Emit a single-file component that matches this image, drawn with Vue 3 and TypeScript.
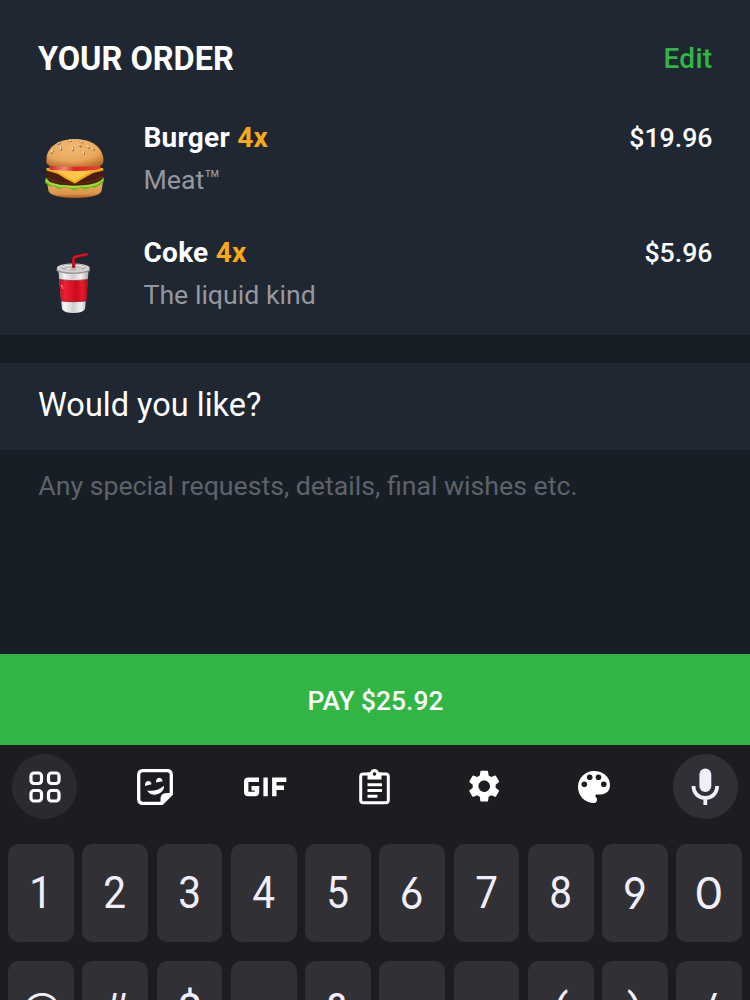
<script setup lang="ts">
interface OrderItem {
  id: 'burger' | 'coke'
  name: string
  count: number
  note: string
  price: string
}

const items: OrderItem[] = [
  { id: 'burger', name: 'Burger', count: 4, note: 'Meat™', price: '$19.96' },
  { id: 'coke', name: 'Coke', count: 4, note: 'The liquid kind', price: '$5.96' },
]

const rows: string[][] = [
  ['1', '2', '3', '4', '5', '6', '7', '8', '9', '0'],
  ['@', '#', '$', '_', '&', '-', '+', '(', ')', '/'],
]
</script>

<template>
  <main class="screen">
    <section class="order">
      <header class="order-head">
        <h1>YOUR ORDER</h1>
        <a class="edit">Edit</a>
      </header>
      <article v-for="item in items" :key="item.id" class="item">
        <svg v-if="item.id === 'burger'" class="thumb" viewBox="0 0 90 90">
          <defs>
            <radialGradient id="bun" cx="0.45" cy="0.3" r="0.75">
              <stop offset="0" stop-color="#f3b870" />
              <stop offset="0.65" stop-color="#e8a85e" />
              <stop offset="1" stop-color="#bd702b" />
            </radialGradient>
            <linearGradient id="base" x1="0" y1="0" x2="0" y2="1">
              <stop offset="0.3" stop-color="#e7a55c" />
              <stop offset="0.75" stop-color="#dc9247" />
              <stop offset="1" stop-color="#a9581c" />
            </linearGradient>
            <linearGradient id="tomato" x1="0" y1="0" x2="1" y2="0">
              <stop offset="0" stop-color="#c91f20" />
              <stop offset="0.3" stop-color="#f3847a" />
              <stop offset="0.5" stop-color="#df2525" />
              <stop offset="1" stop-color="#e04434" />
            </linearGradient>
          </defs>
          <path d="M17 57 Q45 62 73 57 L71.500 66 Q69 72.500 45 73 Q21 72.500 18.500 66 Z" fill="url(#base)" />
          <path d="M16 53 Q14 56 15.500 58.500 Q18 58.500 19 62 Q23 60.500 26 62.500 Q29 65.500 33 63 Q37 61.500 40 63.500 Q44 66.500 48 63.500 Q52 62 54 64.500 Q58 64.500 61 62 Q65 64.500 68 60.500 Q70 61.500 72 58 Q75 57 73.500 52 Z" fill="#6db51c" />
          <path d="M16.500 54.500 Q18 58 22 59 Q27 60 31 61.500 Q36 60 41 62 Q47 62.500 52 60.800 Q57 62 62 60 Q68 60 72.500 54" fill="none" stroke="#a0dc3c" stroke-width="2" />
          <path d="M17 46 Q45 48 73 46 Q75.500 52 70 56 Q61 60.500 45 60.500 Q29 60.500 20 57 Q14.500 53 17 46Z" fill="#4a1d12" />
          <path d="M18 53 Q28 58.500 44 58.300 Q62 58.500 72 51.500" fill="none" stroke="#692a18" stroke-width="1.200" />
          <path d="M16.500 43 L73 43 L73.500 45.500 L63 48 Q54 53 45 58.500 Q35 54 28 49 L16.500 45.500 Z" fill="#f6a51b" />
          <path d="M17.500 43.200 H72 L61 46.500 Q52 52 44.500 56.500 Q36 52 29 47.500Z" fill="#ffc747" />
          <path d="M19 41 Q18 45.500 24 45 Q45 47 65 45 Q72 44.500 70.500 41 Z" fill="url(#tomato)" />
          <path d="M16.500 34 C17 23 27 14 45 14 S72.500 23 73.500 34 Q74 40 69 41 Q45 42.500 21 41 Q15.500 40 16.500 34Z" fill="url(#bun)" />
          <g stroke="#8e6032" stroke-width="1.700" stroke-linecap="round">
            <path d="M23 26 L21.500 28 M31 22.500 V25 M43 22.500 V25.500 M54 27 V29 M58 21 L59 23 M30 18 L28.500 19 M39 16 H41 M50 16.500 L52 17.500 M49 20 L51 21.500 M62 23 L64 25" />
          </g>
          <g stroke="#f3dfb5" stroke-width="1.400" stroke-linecap="round">
            <path d="M22.500 25.500 L21.500 27 M30.500 22 V24 M42.500 22.500 V24.500 M53.500 26.500 V28.500 M57.500 20.500 L58.500 22 M29.500 17.500 L28.500 18.300 M39 15.500 H40.500 M50 16 L51.500 17 M48.500 19.500 L50 20.500 M61.500 22.500 L63 24" />
          </g>
        </svg>
        <svg v-else class="thumb" viewBox="0 0 90 90">
          <defs>
            <linearGradient id="cup" x1="0" y1="0" x2="1" y2="0">
              <stop offset="0" stop-color="#bdbdbf" />
              <stop offset="0.2" stop-color="#f5f5f5" />
              <stop offset="0.5" stop-color="#cfcfcf" />
              <stop offset="0.75" stop-color="#f2f2f2" />
              <stop offset="1" stop-color="#a8a6a8" />
            </linearGradient>
            <linearGradient id="sleeve" x1="0" y1="0" x2="1" y2="0">
              <stop offset="0" stop-color="#b80f20" />
              <stop offset="0.2" stop-color="#ed2035" />
              <stop offset="0.6" stop-color="#cc0a1e" />
              <stop offset="0.8" stop-color="#e91a30" />
              <stop offset="1" stop-color="#a80c1a" />
            </linearGradient>
          </defs>
          <path d="M28.500 32 H58.500 L55 69 Q53 73 43.500 73 Q34 73 32 69 Z" fill="url(#cup)" />
          <path d="M29 39.500 Q43 42 58.200 39.500 L56.500 61 Q43 62.500 31 61Z" fill="url(#sleeve)" />
          <path d="M29 39.500 Q43 42 58.200 39.500 M31 61 Q43 62.500 56.500 61" fill="none" stroke="#79121d" stroke-width="0.700" />
          <ellipse cx="43.200" cy="30" rx="16.800" ry="4" fill="#aaa5a5" />
          <ellipse cx="43.200" cy="28" rx="16.400" ry="4.600" fill="#d8d3d2" />
          <ellipse cx="43.200" cy="27.200" rx="12.500" ry="2.800" fill="#c3bcbb" stroke="#9b9494" stroke-width="0.700" />
          <path d="M31 27 Q43 23 55 27 M36 29 H41 M46 29 H51" stroke="#eee" stroke-width="1" fill="none" />
          <path d="M27 30.700 Q43 36 59.500 30.700" stroke="#817c7c" stroke-width="1" stroke-dasharray="1.200 1.200" fill="none" />
          <path d="M43.700 26.500 V19 Q43.700 17.200 46 16.700 L56.500 14.500" stroke="#a70b19" stroke-width="3.300" fill="none" stroke-linecap="round" />
          <path d="M43.300 25 V19 Q43.300 17 46 16.400 L56.500 14.200" stroke="#dc1a2c" stroke-width="1.500" fill="none" stroke-linecap="round" />
          <path d="M31 46 h1.500 M32 48 h1.200 M31.300 44.800 v0.800" stroke="#ffc6c6" stroke-width="1" />
        </svg>
        <div class="details">
          <h2>{{ item.name }} <span class="count">{{ item.count }}x</span></h2>
          <p>{{ item.note }}</p>
        </div>
        <span class="price">{{ item.price }}</span>
      </article>
    </section>

    <section class="suggest"><span>Would you like?</span></section>
    <section class="comment"><span>Any special requests, details, final wishes etc.</span></section>
    <button class="pay"><span>PAY $25.92</span></button>

    <section class="keyboard">
      <nav class="tools">
        <span class="tool round menu">
          <svg width="32" height="32" viewBox="0 0 32 32" fill="none" stroke="#fff" stroke-width="3.200">
            <rect x="2" y="2" width="10.500" height="10.500" rx="3" />
            <rect x="19.500" y="2" width="10.500" height="10.500" rx="3" />
            <rect x="2" y="19.500" width="10.500" height="10.500" rx="3" />
            <rect x="19.500" y="19.500" width="10.500" height="10.500" rx="3" />
          </svg>
        </span>
        <span class="tool">
          <svg width="36" height="36" viewBox="0 0 36 36">
            <path d="M6 1.700 H30 Q34.300 1.700 34.300 6 V25 L25 34.300 H6 Q1.700 34.300 1.700 30 V6 Q1.700 1.700 6 1.700Z" fill="none" stroke="#fff" stroke-width="3.300" />
            <path d="M23.500 35 V30 Q23.500 24 29.500 24 H35Z" fill="#fff" />
            <path d="M10 21.500 C17 22.500 23 20.500 27 16.700 C27.500 22 22 25.700 17.500 25.700 Q12.500 25.700 10 21.500Z" fill="#fff" />
            <path d="M8 17 Q7.700 12.500 11 12 Q14 12 14.500 15.300Z M19 13.500 Q19 9 22 8.700 Q25.200 9 25.700 12.300Z" fill="#fff" />
          </svg>
        </span>
        <span class="tool">
          <svg width="44" height="20" viewBox="0 0 44 20" fill="none" stroke="#fff" stroke-width="4.400">
            <path d="M16 2.700 H5.200 Q3.200 2.700 3.200 4.700 V15 Q3.200 17 5.200 17 H12 Q14 17 14 15 V11.300 H8.500" />
            <path d="M22.600 0.500 V19.200 M31.300 19.200 V2.700 H43.300 M31.300 10.800 H41" />
          </svg>
        </span>
        <span class="tool">
          <svg width="31" height="36" viewBox="0 0 31 36">
            <rect x="1.700" y="5" width="27.600" height="28.800" rx="2.600" fill="none" stroke="#fff" stroke-width="3" />
            <path d="M8.500 3.500 H11.200 Q12 0 15.500 0 T19.800 3.500 H22.500 V10.500 H8.500Z" fill="#fff" />
            <circle cx="15.500" cy="5" r="1.800" fill="#1d1c20" />
            <path d="M8.500 15.700 H23 M8.500 21.500 H23 M8.500 27.300 H18.500" stroke="#fff" stroke-width="3" />
          </svg>
        </span>
        <span class="tool nudge">
          <svg width="38.400" height="38.400" viewBox="0 0 24 24" fill="#fff">
            <path d="M19.140 12.940c.04-.3.06-.61.06-.94s-.02-.64-.07-.94l2.030-1.580a.49.49 0 0 0 .12-.61l-1.920-3.320a.488.488 0 0 0-.59-.22l-2.390.96a7 7 0 0 0-1.620-.94l-.36-2.540a.484.484 0 0 0-.48-.41h-3.840c-.24 0-.43.170-.47.410l-.36 2.540c-.59.240-1.130.570-1.620.940l-2.390-.96a.49.49 0 0 0-.59.220L2.740 8.870c-.12.210-.08.470.12.610l2.030 1.580c-.05.300-.09.630-.09.940s.02.640.07.940l-2.030 1.580a.49.49 0 0 0-.12.610l1.920 3.320c.12.220.37.290.59.220l2.390-.96c.5.380 1.030.7 1.620.94l.36 2.540c.05.240.24.410.48.410h3.840c.24 0 .44-.17.470-.41l.36-2.540c.59-.24 1.130-.56 1.620-.94l2.390.96c.22.080.47 0 .59-.22l1.920-3.320a.49.49 0 0 0-.12-.61zM12 15.600A3.610 3.610 0 0 1 8.400 12c0-1.980 1.620-3.600 3.600-3.600s3.600 1.620 3.600 3.600-1.620 3.600-3.600 3.600z" />
          </svg>
        </span>
        <span class="tool nudge">
          <svg width="32" height="32" viewBox="0 0 32 32">
            <path d="M16 0 C25 0 32 5.800 32 14 C32 20 28 23.500 22.500 23.500 H19 Q16.500 24 17.700 26 Q20 28 18.500 30.500 Q18 32 16 32 C7 32 0 25 0 16 S7 0 16 0Z" fill="#fff" />
            <g fill="#1d1c20"><circle cx="6.300" cy="13.300" r="2.800" /><circle cx="11.700" cy="6.300" r="2.800" /><circle cx="20.500" cy="6.300" r="2.800" /><circle cx="25.800" cy="13.300" r="2.800" /></g>
          </svg>
        </span>
        <span class="tool round mic">
          <svg width="28" height="38" viewBox="0 0 28 38">
            <rect x="8.400" y="0.500" width="11.900" height="23.500" rx="5.900" fill="#f0eefa" />
            <path d="M2.500 18 C2.500 34 26.100 34 26.100 18 M14.300 29.500 V37" fill="none" stroke="#f0eefa" stroke-width="3.800" />
          </svg>
        </span>
      </nav>
      <div v-for="(row, i) in rows" :key="i" class="row">
        <button v-for="key in row" :key="key" class="key">
          <span :class="{ digit: i === 0, open: key === '6' || key === '9', zero: key === '0', plus: key === '+' }">{{ key }}</span>
        </button>
      </div>
    </section>
  </main>
</template>

<style>
body {
  margin: 0;
  background: #1d1c20;
}
</style>

<style scoped>
.screen {
  width: 750px;
  height: 1000px;
  overflow: hidden;
  display: flex;
  flex-direction: column;
  background: #171e26;
  color: #fff;
  font-family: Roboto, 'Liberation Sans', sans-serif;
  font-size: 26.700px;
}
h1, h2, p {
  margin: 0;
}
button {
  border: 0;
  padding: 0;
  font: inherit;
  color: inherit;
}
.order {
  box-sizing: border-box;
  flex: none;
  height: 335px;
  padding: 38px 37.500px 0 38px;
  background: #1e2732;
}
.order-head {
  display: flex;
  justify-content: space-between;
  height: 72px;
  line-height: 40px;
}
h1 {
  font-size: 32.500px;
  line-height: 42px;
  font-weight: 700;
}
.edit {
  color: #31b545;
  font-size: 28px;
  letter-spacing: 0.300px;
  line-height: 41px;
  font-weight: 500;
}
.item {
  display: flex;
  height: 114.600px;
}
.thumb {
  flex: none;
  width: 90px;
  height: 90px;
  margin: 15px 23.500px 0 -8px;
}
.details {
  flex: 1;
  padding-top: 8px;
}
h2 {
  font-size: 28px;
  letter-spacing: 0.250px;
  line-height: 40px;
  font-weight: 700;
}
.count {
  color: #f8a917;
}
p {
  line-height: 40px;
  margin-top: 2.300px;
  color: #96979e;
}
.price {
  padding-top: 8.300px;
  line-height: 40px;
  font-weight: 500;
}
.suggest {
  flex: none;
  height: 87px;
  margin-top: 28px;
  padding-left: 38px;
  background: #1e2732;
  font-size: 32.500px;
  line-height: 85px;
}
.comment {
  flex: none;
  height: 204px;
  padding-left: 38.300px;
  line-height: 73px;
  color: #5e626b;
}
.pay {
  flex: none;
  height: 91px;
  padding-left: 1px;
  background: #31b545;
  font-size: 26.400px;
  font-weight: 500;
  line-height: 94px;
}
.keyboard {
  flex: none;
  height: 255px;
  background: #1d1c20;
}
.tools {
  display: flex;
  justify-content: space-between;
  align-items: center;
  height: 83.400px;
  padding: 0 12px;
  margin-bottom: 16px;
}
.tool {
  width: 65px;
  height: 65px;
  display: flex;
  align-items: center;
  justify-content: center;
}
.nudge svg {
  margin-right: 2px;
}
.round {
  border-radius: 50%;
}
.menu {
  background: #2a2b30;
}
.mic {
  background: #313036;
}
.row {
  display: flex;
  gap: 8.500px;
  padding: 0 8px;
  margin-bottom: 19px;
}
.key {
  flex: 1;
  height: 97.700px;
  border-radius: 10.500px;
  background: #313035;
  color: #f0eefa;
  font-size: 45px;
  line-height: 96px;
}
.key span {
  display: inline-block;
}
.key .digit {
  transform: scaleX(0.900);
}
.key .open {
  font-family: Inter, Roboto, sans-serif;
  font-size: 44px;
  font-feature-settings: 'ss01' 1;
  transform: scaleX(0.940);
}
.key .zero {
  font-family: Inter, Roboto, sans-serif;
  font-size: 44px;
  transform: scaleX(1.050);
}
.key .plus {
  padding-top: 3px;
}
</style>
